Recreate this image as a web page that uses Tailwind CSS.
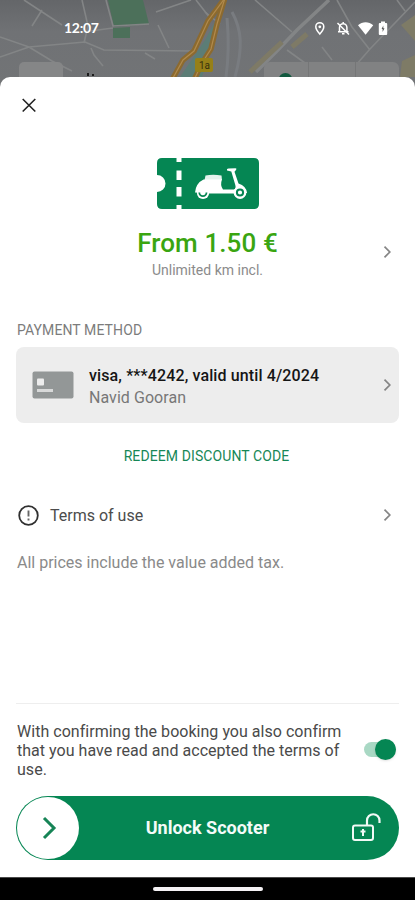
<!DOCTYPE html>
<html lang="en">
<head>
<meta charset="utf-8">
<title>Unlock Scooter</title>
<script src="https://cdn.jsdelivr.net/npm/@tailwindcss/browser@4"></script>
</head>
<body class="w-[415px] h-[900px] overflow-hidden bg-black font-['Roboto',sans-serif] antialiased">
<div class="flex flex-col w-[415px] h-[900px]">
  <header class="relative h-[77px] shrink-0">
    <svg class="absolute left-0 top-0" width="415" height="92" viewBox="0 0 415 92" fill="none">
      <defs><linearGradient id="shade" x1="0" y1="0" x2="0" y2="1"><stop stop-color="#646669"/><stop offset=".35" stop-color="#707275"/><stop offset="1" stop-color="#727476"/></linearGradient></defs>
      <rect width="415" height="92" fill="url(#shade)"/>
      <path d="M108 0H143L149 24L114 27Z" fill="#4c705a"/>
      <path d="M113 28L130 27V38H113Z" fill="#4c705a"/>
      <path d="M205 40L217 18L212 47L202 77H180Z" fill="#5c7d76"/>
      <g stroke="#797c80" stroke-width="3"><path d="M227 18C228 30 230 48 226 77M232 12C242 30 243 48 235 77"/></g>
      <g stroke="#838586" stroke-width="1.6">
        <path d="M24 0L62 25M42 10L32 26M106 0L113 26L149 24M113 28L83 32M82 0L88 26L84 43M156 12L191 0M196 0L210 18M158 25L169 48"/>
        <path d="M0 37L29 47L85 42L104 50L194 51M29 47L0 57M29 47L52 61L72 71M91 48L94 55L103 66M145 53L155 59M205 12L220 24"/>
        <path d="M255 0L292 32M287 50L305 63M322 47L332 60M337 0L352 27L370 50M415 2L370 49L356 65M397 0L405 11"/>
      </g>
      <path d="M329 0L297 30L276 52L256 72" stroke="#838586" stroke-width="3.500"/>
      <path d="M250 72L282 42M292 47L307 34" stroke="#7e7a66" stroke-width="5"/>
      <path d="M415 15L401 25L415 41ZM402 61L415 55V77H400Z" fill="#7e7b66"/>
      <g stroke="#8c6a2f" stroke-width="5.500"><path d="M225 -2L208 21L194 51L183 60L173 78"/><path d="M225 -2L217 24L211 49L202 63L194 80"/></g>
      <g stroke="#b18a4c" stroke-width="1.200"><path d="M225 -2L208 21L194 51L183 60L173 78"/><path d="M225 -2L217 24L211 49L202 63L194 80"/></g>
      <rect x="195" y="58" width="18" height="14" rx="2" fill="#968018"/>
      <text x="199" y="69" font-size="10" font-family="Roboto" fill="#38320e">1a</text>
      <rect x="19" y="62" width="44" height="30" rx="5" fill="#858687"/>
      <path d="M87 73h2v3h-2zM92 74h2v2h-2z" fill="#1c1c1c"/>
      <rect x="264" y="62" width="135" height="30" rx="6" fill="#818283"/>
      <path d="M308.500 62V77M355.500 62V77" stroke="#757677"/>
      <circle cx="285.500" cy="80" r="7" fill="#12593f"/>
    </svg>
    <div class="relative flex items-center h-[55px] pl-[64px] pr-[27px] text-white">
      <span class="text-[14px] leading-none font-bold tracking-[-0.3px] w-[36px] font-['Lato',sans-serif]">12:07</span>
      <svg class="ml-auto" width="74" height="16" viewBox="314 19 74 16" fill="none">
        <path d="M319.800 21.700a4 4 0 0 1 4 4c0 2.800-4 7.300-4 7.300s-4-4.500-4-7.300a4 4 0 0 1 4-4Z" stroke="#fff" stroke-width="1.500"/><circle cx="319.800" cy="25.800" r="1.400" fill="#fff"/>
        <path d="M339.500 30.500v-4a3.700 3.700 0 0 1 7.400 0v4M338 30.700h10.500M343.200 21v2M342 32.800h2.500" stroke="#fff" stroke-width="1.500"/><path d="M337.500 22L349 33.500" stroke="#fff" stroke-width="1.500"/>
        <path d="M358 24.200C362.200 20.300 369 20.300 373.200 24.200L365.600 33.800Z" fill="#fff"/>
        <path d="M381 20.500h4v1.500h1.200q1 0 1 1v10q0 1-1 1h-6.400q-1 0-1-1v-10q0-1 1-1h1.200z" fill="#fff"/><path d="M383.300 24.500l-1.700 3.500h1v3l1.900-3.700h-1.200z" fill="#555"/>
      </svg>
    </div>
  </header>

  <main class="relative flex flex-col h-[800px] shrink-0 bg-white rounded-t-[10px] px-4">
    <div class="flex items-center h-[56px] pl-[5px]">
      <svg width="16" height="16" viewBox="0 0 16 16"><path d="M1.700 2L14.300 14.500M14.300 2L1.700 14.500" stroke="#222" stroke-width="1.600"/></svg>
    </div>

    <section class="grid grid-cols-[24px_1fr_24px] items-center h-[147px] pt-[25px]">
      <span></span>
      <div class="flex flex-col items-center">
        <svg width="102" height="51" viewBox="0 0 102 51" fill="none">
          <path d="M5 0H19.500V4H24.500V0H97Q102 0 102 5V46Q102 51 97 51H24.500V47H19.500V51H5Q0 51 0 46V34A8.500 8.500 0 0 0 0 17V5Q0 0 5 0Z" fill="#058653"/>
          <path d="M22 12.500V22M22 29V38.500" stroke="#fff" stroke-width="5"/>
          <path d="M48.500 17.500Q56 16 64.500 17.500L65 22H47.500Z" fill="#e4f2ec"/>
          <path d="M46.500 21.500H65Q62.800 27 66 31.500L77 31.600Q79.300 30.500 78.300 27L74.300 13.500L70 12.400Q69.300 10.700 71.500 10.600L78.500 10.300Q80.200 10.600 79 12L77.500 13.700L81.500 25.500Q89.300 28 90 35H88.500A6 6 0 0 0 77.500 35.500H50A6 6 0 0 0 48 34.500H38Q39 25 46.500 21.500Z" fill="#fff"/>
          <circle cx="46" cy="34.800" r="6.200" fill="#fff"/><path d="M42.300 34.500a3.600 3.600 0 0 0 7.200 0" stroke="#058653" stroke-width="1.800"/>
          <circle cx="83" cy="34.500" r="6.400" fill="#fff"/><circle cx="83" cy="34.500" r="3.100" stroke="#058653" stroke-width="2"/>
        </svg>
        <p class="mt-[17px] text-[26px] leading-[34px] font-medium tracking-[0.1px] text-[#3aa511]">From 1.50 €</p>
        <p class="text-[14px] leading-[20px] text-[#8b8b8b] whitespace-nowrap">Unlimited km incl.</p>
      </div>
      <svg class="justify-self-end mr-[7px] mt-[65px]" width="9" height="14" viewBox="0 0 9 14" fill="none"><path d="M1.500 1.700L6.800 7L1.500 12.300" stroke="#858585" stroke-width="1.700"/></svg>
    </section>

    <h2 class="mt-[40px] pl-px text-[14px] leading-[20px] tracking-[0.1px] text-[#7c7c7c]">PAYMENT METHOD</h2>
    <section class="flex items-center mt-[7px] h-[76px] rounded-[8px] bg-[#ededed] pl-4 pr-[7px]">
      <svg width="42" height="28" viewBox="0 0 42 28"><rect x=".5" y=".5" width="41" height="27" rx="2" fill="#939797"/><rect x="5" y="7.500" width="7" height="7" rx="1" fill="#ededed"/><rect x="5" y="18" width="16" height="3" fill="#d8d9d9"/></svg>
      <div class="ml-[15px] pt-[3px] whitespace-nowrap text-[16px] leading-[22px]">
        <p class="font-medium tracking-[0.12px] text-[#151515]">visa, ***4242, valid until 4/2024</p>
        <p class="tracking-[0.05px] text-[#777]">Navid Gooran</p>
      </div>
      <svg class="ml-auto" width="9" height="14" viewBox="0 0 9 14" fill="none"><path d="M1.500 1.700L6.800 7L1.500 12.300" stroke="#858585" stroke-width="1.700"/></svg>
    </section>
    <button class="mt-[23px] self-center pr-[2px] text-[14px] leading-[20px] tracking-[0.1px] text-[#168756]">REDEEM DISCOUNT CODE</button>

    <section class="flex items-center mt-[37px] h-[24px] pl-[2px] pr-[7px]">
      <svg width="21" height="21" viewBox="0 0 21 21" fill="none"><circle cx="10.500" cy="10.500" r="9.300" stroke="#303030" stroke-width="1.800"/><path d="M10.500 5.500V11.500M10.500 13.500V15.500" stroke="#666" stroke-width="1.900"/></svg>
      <span class="ml-[11px] pt-[2px] text-[16px] leading-[22px] text-[#4c4c4c]">Terms of use</span>
      <svg class="ml-auto" width="9" height="14" viewBox="0 0 9 14" fill="none"><path d="M1.500 1.700L6.800 7L1.500 12.300" stroke="#858585" stroke-width="1.700"/></svg>
    </section>
    <p class="mt-[26px] pl-px text-[16px] leading-[20px] text-[#8a8a8a] whitespace-nowrap">All prices include the value added tax.</p>

    <section class="mt-auto border-t border-[#eeeeee] pt-[18px] pb-[17px]">
      <div class="flex items-center h-[57px]">
        <p class="pl-px text-[16px] leading-[19px] tracking-[0.03px] text-[#4a4a4a] whitespace-nowrap">With confirming the booking you also confirm<br>that you have read and accepted the terms of<br>use.</p>
        <div class="ml-auto mr-[3px] mb-[2px] flex items-center justify-end w-[32px] h-[15px] rounded-full bg-[#a9d8c4]">
          <span class="size-[21px] shrink-0 rounded-full bg-[#058653] shadow-sm"></span>
        </div>
      </div>
      <div class="grid grid-cols-[62px_1fr_62px] items-center mt-[17px] h-[64px] rounded-full bg-[#058653] px-px">
        <span class="flex items-center justify-center size-[62px] rounded-full bg-white pl-px">
          <svg width="16" height="24" viewBox="0 0 16 24" fill="none"><path d="M3 2L13 12L3 22" stroke="#168456" stroke-width="3"/></svg>
        </span>
        <span class="text-center text-[18px] leading-[24px] font-bold text-[#f4fbf8] whitespace-nowrap">Unlock Scooter</span>
        <svg class="justify-self-end mr-[16px] mb-[2px]" width="31" height="30" viewBox="0 0 31 30" fill="none"><rect x="2" y="13.500" width="20" height="14.500" rx="2" stroke="#f2faf6" stroke-width="2"/><path d="M16 13V8.500a6.200 6.200 0 0 1 12.500 0V11" stroke="#f2faf6" stroke-width="2.200"/><path d="M12 17V24M9.500 19.500H14.500" stroke="#f2faf6" stroke-width="2"/></svg>
      </div>
    </section>
  </main>
  <footer class="flex items-center justify-center flex-1 bg-black border-t border-[#4a4a4a]">
    <span class="w-[110px] h-[4px] rounded-full bg-[#f5f2f5]"></span>
  </footer>
</div>
</body>
</html>
